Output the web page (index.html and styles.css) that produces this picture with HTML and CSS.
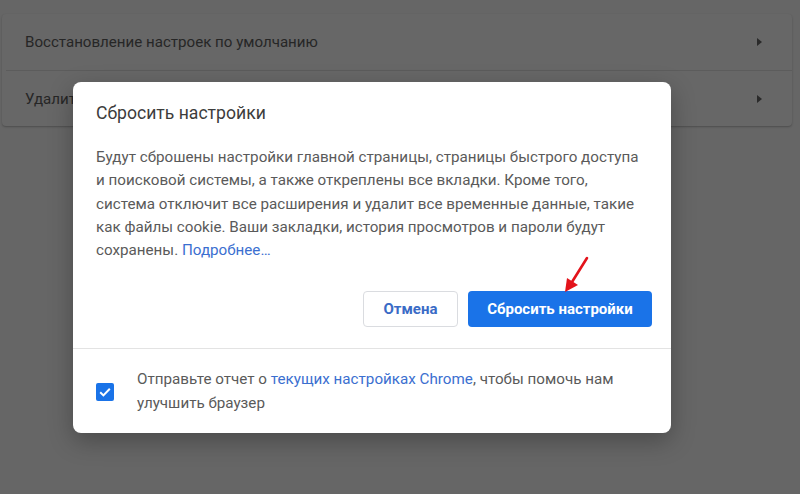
FILE: index.html
```html
<!DOCTYPE html>
<html>
<head>
<meta charset="utf-8" />
<title>Сбросить настройки</title>
<link rel="stylesheet" href="styles.css">
</head>
<body>
<div class="settings_card">
<div class="settings_row">
<span>Восстановление настроек по умолчанию</span>
<span class="arrow"></span>
</div>
<div class="settings_row">
<span>Удалить вредоносное ПО с компьютера</span>
<span class="arrow"></span>
</div>
</div>

<div class="dialog">
<div class="dialog_title">Сбросить настройки</div>
<div class="dialog_body">
Будут сброшены настройки главной страницы, страницы быстрого доступа<br />
и поисковой системы, а также откреплены все вкладки. Кроме того,<br />
система отключит все расширения и удалит все временные данные, такие<br />
как файлы cookie. Ваши закладки, история просмотров и пароли будут<br />
сохранены. <a href="#">Подробнее…</a>
</div>
<div class="dialog_buttons">
<button class="btn btn_cancel">Отмена</button>
<button class="btn btn_action">Сбросить настройки</button>
<svg class="red_arrow" width="30" height="40" viewBox="0 0 30 40">
<line x1="24" y1="2" x2="9" y2="26" stroke="#e3131b" stroke-width="2.6" stroke-linecap="round" />
<polygon points="2,36 4,22 15,29" fill="#e3131b" />
</svg>
</div>
<div class="dialog_footer">
<span class="checkbox">
<svg width="18" height="18" viewBox="0 0 18 18">
<rect width="18" height="18" rx="2" fill="#1a73e8" />
<path d="M4.2 9.3 L7.4 12.4 L13.8 5.8" fill="none" stroke="#fff" stroke-width="2" />
</svg>
</span>
<span class="footer_text">Отправьте отчет о <a href="#">текущих настройках Chrome</a>, чтобы помочь нам<br />
улучшить браузер</span>
</div>
</div>
</body>
</html>
```

FILE: styles.css
```css
html, body { height: 100%; }
body {
margin: 0;
background: #666;
font-family: Roboto, "Liberation Sans", sans-serif;
overflow: hidden; }
.settings_card {
margin: 14px 8px 0 2px;
background: #676767;
border-radius: 4px;
box-shadow: 0 1px 2px rgba(0, 0, 0, 0.25); }
.settings_row {
display: flex;
align-items: center;
justify-content: space-between;
height: 56px;
padding: 0 30px 0 23px;
font-size: 15.1px;
color: #262626; }
.settings_row + .settings_row { border-top: 1px solid #5c5c5c; margin-left: 4px; padding-left: 19px; height: 55px; }
.arrow {
width: 0;
height: 0;
border-top: 4.5px solid transparent;
border-bottom: 4.5px solid transparent;
border-left: 5px solid #2a2a2a; }
.dialog {
position: absolute;
left: 73px;
top: 82px;
width: 598px;
height: 351px;
box-sizing: border-box;
background: #fff;
border-radius: 8px;
box-shadow: 0 8px 24px rgba(0, 0, 0, 0.28);
color: #5f6368; }
.dialog_title {
padding: 21px 23px 0;
font-size: 17.6px;
color: #3c3c3c; }
.dialog_body {
padding: 23px 8px 0 23px;
font-size: 15.2px;
line-height: 23.3px;
white-space: nowrap;
color: #5a5a5a; }
a { color: #3b6fd0; text-decoration: none; }
.dialog_buttons {
position: relative;
display: flex;
justify-content: flex-end;
gap: 10px;
padding: 29px 19px 0;
height: 36px; }
.btn {
height: 36px;
border-radius: 4px;
font-family: Roboto, "Liberation Sans", sans-serif;
font-size: 15px;
font-weight: bold;
padding: 0 10px; }
.btn_cancel {
width: 95px;
background: #fff;
border: 1px solid #dadce0;
color: #3a6bc6; }
.btn_action {
width: 184px;
background: #1a73e8;
border: none;
color: #fff; }
.red_arrow {
position: absolute;
left: 490px;
top: -6px; }
.dialog_footer {
display: flex;
align-items: center;
margin-top: 21px;
border-top: 1px solid #e3e3e3;
padding: 19px 23px 0;
gap: 23px;
font-size: 15.2px;
line-height: 23.5px;
white-space: nowrap;
color: #5a5a5a; }
.checkbox { display: flex; margin-top: 0; }
```
